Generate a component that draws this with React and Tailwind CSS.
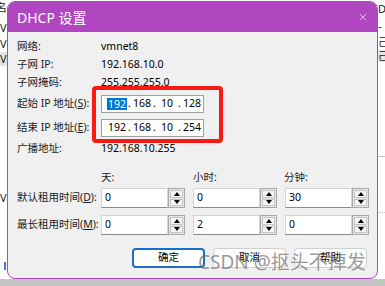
import { X } from "lucide-react";

const font = { fontFamily: '"Noto Sans", "Noto Sans CJK SC", sans-serif' };

function Spinner() {
  return (
    <div className="flex h-[20px] w-[17px] flex-col border border-[#a8a8a8] bg-[#e6e6e6] p-[1px] gap-[1px]">
      <div className="flex flex-1 items-center justify-center border border-[#c4c4c4] bg-[#f4f4f4]">
        <div className="h-0 w-0 border-x-[3px] border-b-[4px] border-x-transparent border-b-black" />
      </div>
      <div className="flex flex-1 items-center justify-center border border-[#c4c4c4] bg-[#f4f4f4]">
        <div className="h-0 w-0 border-x-[3px] border-t-[4px] border-x-transparent border-t-black" />
      </div>
    </div>
  );
}

function TimeField({ value }) {
  return (
    <div className="flex w-[92px]">
      <div className="flex h-[20px] w-[67px] items-center border border-[#d4d4d4] border-b-[#8a8a8a] bg-white pl-[3px] text-[10.5px] text-black">
        {value}
      </div>
      <Spinner />
    </div>
  );
}

function IpBox({ parts, selected }) {
  return (
    <div className="flex h-[18px] w-[103px] items-center border border-[#a0a0a0] bg-white pl-[6px] text-[10.5px] text-black">
      {parts.map((p, i) => (
        <div key={i} className="flex items-center">
          {i > 0 && <span className="w-[7px] text-center">.</span>}
          <span className="flex w-[18px] justify-center">
            <span className={i === 0 && selected ? "bg-[#0078d7] px-[1px] text-white leading-[12px]" : ""}>{p}</span>
          </span>
        </div>
      ))}
    </div>
  );
}

function Row({ label, children, className = "" }) {
  return (
    <div className={"flex items-center " + className}>
      <div className="w-[84px] text-[10.5px] text-[#1a1a1a]">{label}</div>
      {children}
    </div>
  );
}

export default function App() {
  return (
    <div className="relative h-[286px] w-[385px] overflow-hidden bg-white" style={font}>
      {/* window behind */}
      <div className="absolute left-0 top-0 h-[286px] w-[10px] text-[11px] leading-none text-[#222]">
        <div className="absolute -left-[4px] top-[2px]">名</div>
        <div className="absolute left-0 top-[22px]">V</div>
        <div className="absolute left-0 top-[38px]">V</div>
        <div className="absolute left-0 top-[52px] h-[14px] w-[10px] bg-[#e4e4e4]" />
        <div className="absolute left-0 top-[53px]">V</div>
        <div className="absolute left-0 top-[192px]">V</div>
        <div className="absolute left-[4px] top-[262px] h-[8px] w-[2px] bg-[#4a7bd0]" />
      </div>
      <div className="absolute right-0 top-0 h-[286px] w-[8px] text-[11px] leading-none text-[#222]">
        <div className="absolute left-[1px] top-[3px]">D</div>
        <div className="absolute left-[1px] top-[20px]">-</div>
        <div className="absolute left-[1px] top-[36px]">己</div>
        <div className="absolute left-0 top-[50px] h-[12px] w-[8px] bg-[#e4e4e4]" />
        <div className="absolute left-[1px] top-[50px]">己</div>
        <div className="absolute left-0 top-[156px] h-[1px] w-[8px] bg-[#c8c8c8]" />
        <div className="absolute left-0 top-[212px] h-[1px] w-[8px] bg-[#d8d8d8]" />
      </div>
      <div className="absolute bottom-0 left-0 h-[7px] w-[385px] bg-[#c4c4c4]" />

      {/* dialog */}
      <div className="absolute left-[7px] top-[1px] flex h-[278px] w-[371px] flex-col overflow-hidden rounded-[8px] border border-[#b047c0] bg-[#f0f0f0]">
        <div className="flex h-[30px] shrink-0 items-center justify-between bg-[#b047c0] pl-[9px] pr-[8px] text-white">
          <span className="text-[14px]">DHCP 设置</span>
          <X className="h-[12px] w-[12px]" strokeWidth={1.3} />
        </div>

        <div className="flex flex-col pl-[9px]">
          <Row label="网络:" className="mt-[6px] h-[18px]">
            <span className="text-[10.5px] text-black">vmnet8</span>
          </Row>
          <Row label="子网 IP:" className="h-[18px]">
            <span className="text-[10.5px] text-black">192.168.10.0</span>
          </Row>
          <Row label="子网掩码:" className="h-[18px]">
            <span className="text-[10.5px] text-black">255.255.255.0</span>
          </Row>
          <Row label={<>起始 IP 地址(<u>S</u>):</>} className="mt-[3px] h-[18px]">
            <IpBox parts={["192", "168", "10", "128"]} selected />
          </Row>
          <Row label={<>结束 IP 地址(<u>E</u>):</>} className="mt-[6px] h-[18px]">
            <IpBox parts={["192", "168", "10", "254"]} />
          </Row>
          <Row label="广播地址:" className="mt-[3px] h-[18px]">
            <span className="text-[10.5px] text-black">192.168.10.255</span>
          </Row>

          <Row label="" className="mt-[11px] h-[18px]">
            <div className="flex text-[10.5px] text-[#1a1a1a]">
              <span className="w-[92px]">天:</span>
              <span className="w-[91px]">小时:</span>
              <span>分钟:</span>
            </div>
          </Row>
          <Row label={<>默认租用时间(<u>D</u>):</>} className="mt-[1px] h-[20px]">
            <TimeField value="0" />
            <TimeField value="0" />
            <TimeField value="30" />
          </Row>
          <Row label={<>最长租用时间(<u>M</u>):</>} className="mt-[7px] h-[20px]">
            <TimeField value="0" />
            <TimeField value="2" />
            <TimeField value="0" />
          </Row>

          <div className="mt-[13px] flex gap-[8px] pl-[115px] text-[10.5px] text-black">
            <button className="h-[20px] w-[73px] rounded-[4px] border-2 border-[#1a6fc9] bg-[#fdfdfd]">确定</button>
            <button className="h-[20px] w-[73px] rounded-[4px] border border-[#d0d0d0] bg-[#fdfdfd]">取消</button>
            <button className="h-[20px] w-[73px] rounded-[4px] border border-[#d0d0d0] bg-[#fdfdfd]">帮助</button>
          </div>
        </div>
      </div>

      {/* annotation */}
      <div className="absolute left-[92px] top-[86px] h-[57px] w-[131px] rounded-[4px] border-[4px] border-[#fb1a12]" />

      {/* watermark */}
      <div className="absolute left-[198px] top-[253px] whitespace-nowrap text-[19px] leading-none text-[#6e6e6e]/70">
        CSDN @抠头不掉发
      </div>
    </div>
  );
}
